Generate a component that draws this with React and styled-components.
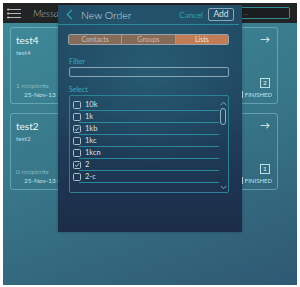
import styled, { createGlobalStyle } from "styled-components"

const GlobalStyle = createGlobalStyle`
  body {
    margin: 0;
    background: #ffffff;
    font-family: Lato, "Open Sans", sans-serif;
  }
  #root {
    padding: 3px;
  }
`

const messages = [
  { title: "test4", body: "test4", recipients: 1, date: "25-Nov-13 11:42", count: 2 },
  { title: "test2", body: "test2", recipients: 0, date: "25-Nov-13 09:17", count: 1 },
]

const lists = [
  { name: "10k", checked: false },
  { name: "1k", checked: false },
  { name: "1kb", checked: true },
  { name: "1kc", checked: false },
  { name: "1kcn", checked: false },
  { name: "2", checked: true },
  { name: "2-c", checked: false },
]

function App() {
  return (
    <>
      <GlobalStyle />
      <Screen>
        <TopBar>
          <Burger>
            <svg width="14" height="11" viewBox="0 0 14 11">
              <g stroke="#b8b8b8" strokeWidth="1.2" fill="none">
                <path d="M0 1.5h14M0 5.5h14M0 9.5h14" />
              </g>
              <g fill="#b8b8b8">
                <circle cx="1.2" cy="1.5" r="1.1" />
                <circle cx="1.2" cy="5.5" r="1.1" />
                <circle cx="1.2" cy="9.5" r="1.1" />
              </g>
            </svg>
          </Burger>
          <BarTitle>Messages</BarTitle>
          <SearchBox>...</SearchBox>
        </TopBar>

        <CardList>
          {messages.map((m) => (
            <Card key={m.title}>
              <CardMain>
                <CardTitle>{m.title}</CardTitle>
                <CardBody>{m.body}</CardBody>
                <Spacer />
                <CardMeta>{m.recipients} recipients</CardMeta>
                <CardDate>{m.date}</CardDate>
              </CardMain>
              <CardSide>
                <Arrow>→</Arrow>
                <Spacer />
                <Badge>{m.count}</Badge>
                <Status>FINISHED</Status>
              </CardSide>
            </Card>
          ))}
        </CardList>

        <Modal>
          <ModalHeader>
            <Back>
              <svg width="7" height="11" viewBox="0 0 7 11">
                <path d="M6 0.8L1.3 5.5L6 10.2" stroke="#3aa9bd" strokeWidth="1.1" fill="none" />
              </svg>
            </Back>
            <ModalTitle>New Order</ModalTitle>
            <Cancel>Cancel</Cancel>
            <AddButton>Add</AddButton>
          </ModalHeader>

          <ModalBody>
            <Segments>
              <Segment>Contacts</Segment>
              <Segment>Groups</Segment>
              <Segment $active>Lists</Segment>
            </Segments>

            <FieldLabel $top={12}>Filter</FieldLabel>
            <FilterInput />

            <FieldLabel $top={8}>Select</FieldLabel>
            <ListBox>
              <Rows>
                {lists.map((l) => (
                  <Row key={l.name}>
                    <RowLine>
                      <Check>
                        {l.checked && (
                          <svg width="6" height="6" viewBox="0 0 6 6">
                            <path d="M1 3.2L2.4 4.6L5 1.3" stroke="#c9dbe3" strokeWidth="0.9" fill="none" />
                          </svg>
                        )}
                      </Check>
                      <RowText>{l.name}</RowText>
                    </RowLine>
                    <Rule />
                  </Row>
                ))}
              </Rows>
              <ScrollCol>
                <svg width="7" height="5" viewBox="0 0 7 5">
                  <path d="M0.8 4L3.5 1.2L6.2 4" stroke="#8fb3c2" strokeWidth="0.9" fill="none" />
                </svg>
                <Thumb />
                <Spacer />
                <svg width="7" height="5" viewBox="0 0 7 5">
                  <path d="M0.8 1L3.5 3.8L6.2 1" stroke="#8fb3c2" strokeWidth="0.9" fill="none" />
                </svg>
              </ScrollCol>
            </ListBox>
          </ModalBody>
        </Modal>
      </Screen>
    </>
  )
}

export default App

const Screen = styled.div`
  position: relative;
  width: 294px;
  height: 282px;
  overflow: hidden;
  background: linear-gradient(160deg, #3f8b9a 0%, #377688 50%, #2f5873 100%);
  display: flex;
  flex-direction: column;
`

const TopBar = styled.div`
  height: 20px;
  flex: none;
  background: #222324;
  display: flex;
  align-items: center;
  padding: 0 7px 0 4px;
`

const Burger = styled.div`
  display: flex;
  width: 14px;
  margin-right: 12px;
`

const BarTitle = styled.div`
  color: #b5b5b5;
  font-size: 10px;
  font-style: italic;
  font-weight: 300;
`

const SearchBox = styled.div`
  margin-left: auto;
  width: 46px;
  height: 10px;
  border: 1px solid #2f8f95;
  border-radius: 2px;
  background: #1c1d1e;
  color: #5d6a6e;
  font-size: 7px;
  line-height: 8px;
  padding-left: 10px;
  box-sizing: content-box;
`

const CardList = styled.div`
  display: flex;
  flex-direction: column;
  gap: 9px;
  padding: 4px 0 0 7px;
  width: 268px;
`

const Card = styled.div`
  height: 77px;
  box-sizing: border-box;
  border: 1px solid rgba(150, 215, 225, 0.45);
  border-radius: 3px;
  display: flex;
  padding: 6px 6px 5px 5px;
`

const CardMain = styled.div`
  flex: 1;
  display: flex;
  flex-direction: column;
`

const Spacer = styled.div`
  flex: 1;
`

const CardTitle = styled.div`
  color: #eef6f8;
  font-size: 10px;
  line-height: 12px;
`

const CardBody = styled.div`
  color: #b6d8df;
  font-size: 6.5px;
  margin-top: 3px;
`

const CardMeta = styled.div`
  color: #c4e0e6;
  font-size: 6.5px;
  font-weight: 300;
`

const CardDate = styled.div`
  color: #c4e0e6;
  font-size: 6.5px;
  margin: 2px 0 0 8px;
`

const CardSide = styled.div`
  display: flex;
  flex-direction: column;
  align-items: flex-end;
`

const Arrow = styled.div`
  color: #e6f2f5;
  font-size: 10px;
  line-height: 10px;
  margin-right: 1px;
`

const Badge = styled.div`
  width: 8px;
  height: 8px;
  border: 1px solid #bde0e6;
  color: #e6f4f6;
  font-size: 6.5px;
  line-height: 8px;
  text-align: center;
  margin: 0 1px 3px 0;
`

const Status = styled.div`
  color: #c4e0e6;
  font-size: 6px;
  border-left: 1px solid #c4e0e6;
  padding-left: 2px;
  line-height: 7px;
  margin-right: -1px;
`

const Modal = styled.div`
  position: absolute;
  left: 55px;
  top: 2px;
  width: 184px;
  height: 227px;
  background:
    radial-gradient(ellipse 120px 90px at 50% 30%, rgba(45, 110, 130, 0.55), rgba(45, 110, 130, 0) 100%),
    linear-gradient(180deg, #214d66 0%, #1f3e5a 55%, #1b2c48 100%);
  box-shadow: 0 0 3px rgba(0, 0, 0, 0.25);
  display: flex;
  flex-direction: column;
`

const ModalHeader = styled.div`
  height: 19px;
  flex: none;
  border-bottom: 1px solid #2a8a9c;
  margin-right: 3px;
  display: flex;
  align-items: center;
  padding: 0 5px 0 8px;
`

const Back = styled.div`
  display: flex;
  margin-right: 8px;
`

const ModalTitle = styled.div`
  color: #c8d9e0;
  font-size: 10.5px;
  font-weight: 300;
`

const Cancel = styled.div`
  margin-left: auto;
  color: #2aa6b8;
  font-size: 8px;
  margin-right: 5px;
`

const AddButton = styled.div`
  width: 24px;
  height: 11px;
  border: 1px solid #8aa8b8;
  border-radius: 2px;
  color: #d4e2e8;
  font-size: 8.5px;
  line-height: 11px;
  text-align: center;
`

const ModalBody = styled.div`
  padding: 9px 13px 0 10px;
  display: flex;
  flex-direction: column;
`

const Segments = styled.div`
  display: flex;
  height: 11px;
  border: 1px solid #98a4aa;
  border-radius: 2px;
  overflow: hidden;
  box-sizing: border-box;
`

const Segment = styled.div`
  flex: 1;
  background: ${(p) => (p.$active ? "#c27c56" : "#876b5a")};
  color: ${(p) => (p.$active ? "#f1e0d2" : "#cbbcb0")};
  font-size: 7px;
  line-height: 9px;
  text-align: center;
  border-left: 1px solid #a09892;

  &:first-child {
    border-left: none;
  }
`

const FieldLabel = styled.div`
  color: #36aec0;
  font-size: 7px;
  line-height: 8px;
  margin-top: ${(p) => p.$top}px;
  padding-left: 1px;
`

const FilterInput = styled.div`
  height: 8px;
  margin: 2px 0 0 1px;
  border: 1px solid #8aa5b3;
  border-radius: 2px;
`

const ListBox = styled.div`
  margin: 2px 0 0 1px;
  height: 91px;
  border: 1px solid #2b8196;
  border-radius: 2px;
  display: flex;
  padding: 3px 1px 2px 3px;
`

const Rows = styled.div`
  flex: 1;
  display: flex;
  flex-direction: column;
`

const Row = styled.div`
  display: flex;
  flex-direction: column;
  height: 12px;
`

const RowLine = styled.div`
  height: 11px;
  display: flex;
  align-items: center;
`

const Check = styled.div`
  width: 6px;
  height: 6px;
  border: 1px solid #a9c0cb;
  border-radius: 1.5px;
  display: flex;
  align-items: center;
  justify-content: center;
  margin-right: 4px;
`

const RowText = styled.div`
  color: #d3e2e8;
  font-size: 7.5px;
`

const Rule = styled.div`
  height: 1px;
  margin-left: 6px;
  width: 140px;
  background: #2a8b9e;
`

const ScrollCol = styled.div`
  width: 8px;
  display: flex;
  flex-direction: column;
  align-items: center;
  padding-top: 2px;
`

const Thumb = styled.div`
  width: 4px;
  height: 15px;
  border: 1px solid #8fb3c2;
  border-radius: 3px;
  margin-top: 2px;
`
